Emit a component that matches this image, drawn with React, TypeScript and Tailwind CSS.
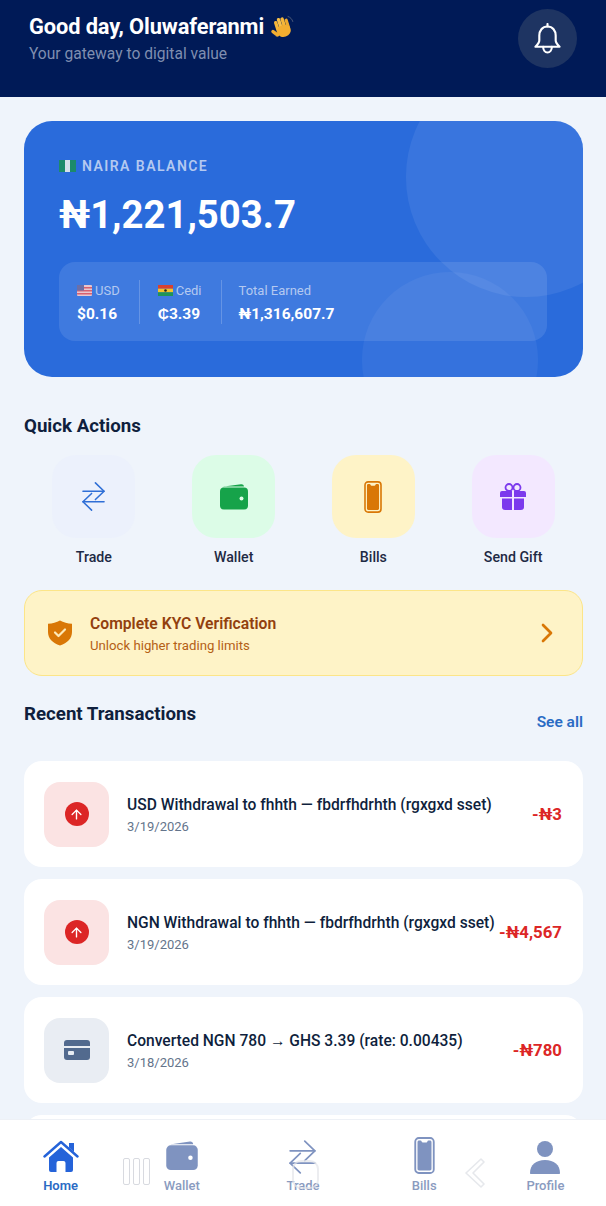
import { ArrowUp, ChevronRight } from "lucide-react";

const font = { fontFamily: "Roboto, sans-serif" };

function WaveHand() {
  return (
    <svg width="24" height="24" viewBox="0 0 24 24">
      <path d="M17 1.500c2.500.8 4 2.500 4.800 5" fill="none" stroke="#4a5878" strokeWidth="1" strokeLinecap="round" />
      <path d="M2 17c.5 2 1.800 3.600 3.800 4.500" fill="none" stroke="#4a5878" strokeWidth="1" strokeLinecap="round" />
      <g transform="rotate(-18 12 13)">
        <rect x="5" y="4" width="3.4" height="12" rx="1.7" fill="#f5b73a" />
        <rect x="8.6" y="2" width="3.4" height="13" rx="1.7" fill="#f7c04a" />
        <rect x="12.2" y="2.5" width="3.4" height="13" rx="1.7" fill="#f5b73a" />
        <rect x="15.8" y="5" width="3.2" height="11" rx="1.6" fill="#eda92f" />
        <ellipse cx="12" cy="16" rx="7" ry="6" fill="#f3ae30" />
        <rect x="1" y="11" width="3.4" height="9" rx="1.7" fill="#f3ae30" transform="rotate(-35 3 15)" />
      </g>
    </svg>
  );
}

function BellIcon() {
  return (
    <svg width="27" height="31" viewBox="0 0 28 32" fill="none" stroke="#fff" strokeWidth="2.200" strokeLinecap="round" strokeLinejoin="round">
      <path d="M14 1v2.500" />
      <path d="M14 3.500C8.500 3.500 5.500 8 5.500 13v5c0 2.500-2 4.500-4 6.500h25c-2-2-4-4-4-6.500v-5C22.500 8 19.500 3.500 14 3.500z" />
      <path d="M9.500 24.500c0 3.500 2 6 4.500 6s4.500-2.500 4.500-6" />
    </svg>
  );
}

function FlagNg() {
  return (
    <svg width="17" height="12" viewBox="0 0 17 12">
      <rect width="17" height="12" rx="1" fill="#d5e0ea" />
      <rect width="6" height="12" fill="#1c8a6a" />
      <rect x="11" width="6" height="12" fill="#1c8a6a" />
    </svg>
  );
}

function FlagUs() {
  return (
    <svg width="15" height="11" viewBox="0 0 15 11">
      <rect width="15" height="11" rx="1" fill="#e9c6cf" />
      <rect y="2" width="15" height="1.5" fill="#d8606f" />
      <rect y="5" width="15" height="1.5" fill="#d8606f" />
      <rect y="8" width="15" height="1.5" fill="#d8606f" />
      <rect width="7" height="5.5" fill="#6b6fa8" />
    </svg>
  );
}

function FlagGh() {
  return (
    <svg width="15" height="11" viewBox="0 0 15 11">
      <rect width="15" height="3.7" fill="#d9412f" />
      <rect y="3.7" width="15" height="3.6" fill="#f3c32d" />
      <rect y="7.3" width="15" height="3.7" fill="#1f9456" />
      <circle cx="7.5" cy="5.5" r="1.3" fill="#222" />
    </svg>
  );
}

function TradeIcon({ w, h, color, width = 2 }: { w: number; h: number; color: string; width?: number }) {
  return (
    <svg width={w} height={h} viewBox="0 0 24 30" fill="none" stroke={color} strokeWidth={width} strokeLinecap="round" strokeLinejoin="round">
      <path d="M1 9.500h22" />
      <path d="M14 .8l9 8.700-9 8.700" />
      <path d="M23 20.500H1" />
      <path d="M10 11.800l-9 8.700 9 8.700" />
    </svg>
  );
}

function WalletIcon({ size, color, hole }: { size: number; color: string; hole: string }) {
  return (
    <svg width={size} height={size} viewBox="0 0 32 32">
      <path d="M4 7.500C5 6 6.500 5.500 8 5.300L23 3.200c1.600-.2 2.800.6 3 2.300H8c-1.500 0-3 .7-4 2z" fill={color} />
      <rect x="2" y="6.500" width="28" height="22" rx="4" fill={color} />
      <circle cx="23.500" cy="17.500" r="2" fill={hole} />
    </svg>
  );
}

function PhoneIcon({ w, h, fill, stroke, bg }: { w: number; h: number; fill: string; stroke: string; bg: string }) {
  return (
    <svg width={w} height={h} viewBox="0 0 20 36">
      <rect x="1" y="1" width="18" height="34" rx="3.500" fill={bg} stroke={stroke} strokeWidth="1.800" />
      <path d="M3.200 5c0-1 .6-1.600 1.600-1.600h1.400c.6 0 .8.300 1 .9.200.7.600 1 1.300 1h3c.7 0 1.100-.3 1.300-1 .2-.6.400-.9 1-.9h1.400c1 0 1.600.6 1.600 1.600v26c0 1-.6 1.600-1.600 1.600H4.800c-1 0-1.600-.6-1.600-1.600z" fill={fill} />
    </svg>
  );
}

function GiftIcon() {
  return (
    <svg width="28" height="30" viewBox="0 0 28 30">
      <circle cx="10" cy="5.500" r="3.500" fill="none" stroke="#7c3aed" strokeWidth="1.800" />
      <circle cx="18" cy="5.500" r="3.500" fill="none" stroke="#7c3aed" strokeWidth="1.800" />
      <path d="M3 9h10v6H1v-4a2 2 0 0 1 2-2z" fill="#7c3aed" />
      <path d="M15 9h10a2 2 0 0 1 2 2v4H15z" fill="#7c3aed" />
      <path d="M3 16.500h10V28H6a3 3 0 0 1-3-3z" fill="#7c3aed" />
      <path d="M15 16.500h10V25a3 3 0 0 1-3 3h-7z" fill="#7c3aed" />
    </svg>
  );
}

function ShieldIcon() {
  return (
    <svg width="28" height="28" viewBox="0 0 28 28">
      <path d="M14 1.500C17.500 3.500 21.500 4.500 26 4.800V13c0 6.500-4.500 11-12 13.500C6.500 24 2 19.500 2 13V4.800C6.500 4.500 10.500 3.500 14 1.500z" fill="#d97706" />
      <path d="M9 13.500l3.500 3.500 6.500-6.500" fill="none" stroke="#fde9b8" strokeWidth="2.200" strokeLinecap="round" strokeLinejoin="round" />
    </svg>
  );
}

function CardIcon() {
  return (
    <svg width="26" height="20" viewBox="0 0 26 20">
      <path d="M3 0h20a3 3 0 0 1 3 3v3H0V3a3 3 0 0 1 3-3z" fill="#526a8e" />
      <path d="M0 8h26v9a3 3 0 0 1-3 3H3a3 3 0 0 1-3-3z" fill="#526a8e" />
      <rect x="4" y="11" width="6" height="4" rx="1" fill="#e8edf3" />
    </svg>
  );
}

function HomeIcon() {
  return (
    <svg width="36" height="34" viewBox="0 0 36 34">
      <path d="M26 3h5v9l-5-4.500z" fill="#2563d9" />
      <path d="M1.500 16.500L18 2l16.500 14.500" fill="none" stroke="#2563d9" strokeWidth="2.400" strokeLinecap="round" strokeLinejoin="round" />
      <path d="M18 7l12 10.500V30a2 2 0 0 1-2 2h-5.500v-9a2 2 0 0 0-2-2h-5a2 2 0 0 0-2 2v9H8a2 2 0 0 1-2-2V17.500z" fill="#2563d9" />
    </svg>
  );
}

function ProfileIcon() {
  return (
    <svg width="32" height="34" viewBox="0 0 32 34">
      <circle cx="16" cy="9" r="8" fill="#7f93c0" />
      <path d="M1 33c0-8 6-13 15-13s15 5 15 13c0 .6-.4 1-1 1H2c-.6 0-1-.4-1-1z" fill="#7f93c0" />
    </svg>
  );
}

const actions = [
  { label: "Trade", bg: "bg-[#ecf1fc]", icon: <TradeIcon w={23} h={29} color="#2f6fd6" width={1.6} /> },
  { label: "Wallet", bg: "bg-[#dcfce7]", icon: <WalletIcon size={32} color="#16a34a" hole="#dcfce7" /> },
  { label: "Bills", bg: "bg-[#fef3c7]", icon: <PhoneIcon w={18} h={32} fill="#d97706" stroke="#d97706" bg="#fef3c7" /> },
  { label: "Send Gift", bg: "bg-[#f3e8ff]", icon: <GiftIcon /> },
];

const txs = [
  { title: "USD Withdrawal to fhhth — fbdrfhdrhth (rgxgxd sset)", date: "3/19/2026", amount: "-₦3", out: true },
  { title: "NGN Withdrawal to fhhth — fbdrfhdrhth (rgxgxd sset)", date: "3/19/2026", amount: "-₦4,567", out: true },
  { title: "Converted NGN 780 → GHS 3.39 (rate: 0.00435)", date: "3/18/2026", amount: "-₦780", out: false },
];

export default function App() {
  return (
    <div style={font} className="relative w-[606px] h-[1206px] overflow-hidden bg-[#eff4fb] flex flex-col">
      <header className="h-[97px] shrink-0 bg-[#001a57] flex items-start justify-between pl-[29px] pr-[29px] pt-[9px]">
        <div>
          <div className="flex items-center gap-[7px] h-[36px]">
            <span className="text-[21.8px] font-bold text-white tracking-[-0.1px]">Good day, Oluwaferanmi</span>
            <WaveHand />
          </div>
          <p className="text-[15.6px] leading-5 text-[#7f8eb0] mt-[-1px]">Your gateway to digital value</p>
        </div>
        <div className="w-[59px] h-[59px] rounded-full bg-[#1e3462] flex items-center justify-center">
          <BellIcon />
        </div>
      </header>

      <main className="flex-1 pl-6 pr-[23px] pt-6">
        <section className="relative h-[256px] rounded-[28px] bg-[#2a6bdb] overflow-hidden pl-[35px] pr-9 pt-9">
          <div className="absolute left-[382px] top-[-64px] w-[240px] h-[240px] rounded-full bg-white/[0.07]" />
          <div className="absolute left-[338px] top-[151px] w-[176px] h-[176px] rounded-full bg-white/[0.05]" />
          <div className="relative flex items-center gap-[6px] h-[18px]">
            <FlagNg />
            <span className="text-[14px] font-semibold tracking-[1.45px] text-[#b4c9f0]">NAIRA BALANCE</span>
          </div>
          <p className="relative text-[38.3px] font-bold leading-[46px] text-white mt-[17px]">₦1,221,503.7</p>
          <div className="relative mt-[24px] h-[79px] rounded-2xl bg-white/10 flex items-center pl-[18px] pt-[3px]">
            <div className="pr-[19px]">
              <div className="flex items-center gap-[3px] text-[13px] text-[#b4c9f0] leading-5"><FlagUs /> USD</div>
              <div className="text-[15.5px] font-bold text-white leading-6 mt-[1px]">$0.16</div>
            </div>
            <div className="w-px h-[44px] bg-white/20 mt-[-3px]" />
            <div className="pl-[18px] pr-[19px]">
              <div className="flex items-center gap-[3px] text-[13px] text-[#b4c9f0] leading-5"><FlagGh /> Cedi</div>
              <div className="text-[15.5px] font-bold text-white leading-6 mt-[1px]">₵3.39</div>
            </div>
            <div className="w-px h-[44px] bg-white/20 mt-[-3px]" />
            <div className="pl-[17px]">
              <div className="text-[13px] text-[#b4c9f0] leading-5">Total Earned</div>
              <div className="text-[15.5px] font-bold text-white leading-6 mt-[1px]">₦1,316,607.7</div>
            </div>
          </div>
        </section>

        <h2 className="text-[18.7px] font-bold text-[#0f1f3d] leading-6 mt-[37px]">Quick Actions</h2>

        <div className="grid grid-cols-4 mt-[17px]">
          {actions.map((a) => (
            <div key={a.label} className="flex flex-col items-center">
              <div className={`w-[83px] h-[83px] rounded-[24px] flex items-center justify-center ${a.bg}`}>{a.icon}</div>
              <span className="text-[14.2px] font-medium text-[#1e2a44] leading-5 mt-[9px]">{a.label}</span>
            </div>
          ))}
        </div>

        <div className="mt-[23px] h-[86px] rounded-[18px] bg-[#fef3c7] border border-[#fce588] flex items-center pl-[21px] pr-[19px]">
          <ShieldIcon />
          <div className="ml-[16px] flex-1 pt-[2px]">
            <p className="text-[15.7px] font-semibold text-[#92400e] leading-5">Complete KYC Verification</p>
            <p className="text-[13.2px] text-[#b45f16] leading-[18px] mt-[3px]">Unlock higher trading limits</p>
          </div>
          <ChevronRight size={32} color="#d97706" strokeWidth={2} />
        </div>

        <div className="flex justify-between mt-[25px] h-[60px]">
          <h2 className="text-[18.7px] font-bold text-[#0f1f3d] leading-6 mt-[1px]">Recent Transactions</h2>
          <span className="text-[15.5px] font-semibold text-[#2a6bc4] leading-5 mt-[11px]">See all</span>
        </div>

        <div className="flex flex-col gap-3">
          {txs.map((t) => (
            <div key={t.title + t.amount} className="h-[106px] shrink-0 rounded-[18px] bg-white flex items-center pl-[20px] pr-[21px]">
              <div className={`w-[65px] h-[65px] shrink-0 rounded-[16px] flex items-center justify-center ${t.out ? "bg-[#fbe3e3]" : "bg-[#e9edf3]"}`}>
                {t.out ? (
                  <div className="w-6 h-6 rounded-full bg-[#dc2626] flex items-center justify-center">
                    <ArrowUp size={15} color="#fff" strokeWidth={2.2} />
                  </div>
                ) : (
                  <CardIcon />
                )}
              </div>
              <div className="ml-[18px] flex-1 min-w-0 pt-[3px]">
                <p className="text-[15.6px] font-medium text-[#0f1f3d] leading-5 whitespace-nowrap">{t.title}</p>
                <p className="text-[13px] text-[#64748b] leading-[18px] mt-[3px]">{t.date}</p>
              </div>
              <span className="text-[16.8px] font-bold text-[#dc2626] whitespace-nowrap pt-[2px]">{t.amount}</span>
            </div>
          ))}
          <div className="h-[40px] shrink-0 rounded-t-[18px] bg-white" />
        </div>
      </main>

      <nav className="absolute left-0 right-0 bottom-0 h-[87px] bg-white border-t border-[#eef1f6]">
        <div className="relative h-full">
          <div className="grid grid-cols-5 h-full pt-[18px]">
            <div className="flex flex-col items-center">
              <div className="h-[36px] flex items-end"><HomeIcon /></div>
              <span className="text-[13px] font-semibold text-[#2a6bc4] mt-[2px] leading-5">Home</span>
            </div>
            <div className="flex flex-col items-center">
              <div className="h-[36px] flex items-end"><WalletIcon size={36} color="#7f93c0" hole="#ffffff" /></div>
              <span className="text-[13px] font-medium text-[#8a9bc0] mt-[2px] leading-5">Wallet</span>
            </div>
            <div className="flex flex-col items-center">
              <div className="h-[36px] flex items-end"><TradeIcon w={27} h={34} color="#7f93c0" width={1.5} /></div>
              <span className="text-[13px] font-medium text-[#8a9bc0] mt-[2px] leading-5">Trade</span>
            </div>
            <div className="flex flex-col items-center">
              <div className="h-[36px] flex items-end"><PhoneIcon w={21} h={37} fill="#7f93c0" stroke="#7f93c0" bg="#ffffff" /></div>
              <span className="text-[13px] font-medium text-[#8a9bc0] mt-[2px] leading-5">Bills</span>
            </div>
            <div className="flex flex-col items-center">
              <div className="h-[36px] flex items-end"><ProfileIcon /></div>
              <span className="text-[13px] font-medium text-[#8a9bc0] mt-[2px] leading-5">Profile</span>
            </div>
          </div>

          {/* android nav bar ghost on top of the tabs */}
          <div className="absolute left-[123px] top-[38px] flex gap-[3px]">
            <div className="w-[7px] h-[27px] rounded-[2px] border border-[#d8dae0]" />
            <div className="w-[7px] h-[27px] rounded-[2px] border border-[#d8dae0]" />
            <div className="w-[7px] h-[27px] rounded-[2px] border border-[#d8dae0]" />
          </div>
          <div className="absolute left-[292px] top-[40px] w-[27px] h-[29px] rounded-[9px] border-2 border-[#e4e6ea]/70" />
          <svg className="absolute left-[464px] top-[38px]" width="22" height="30" viewBox="0 0 22 30" fill="none" stroke="#e6e8ec" strokeWidth="1.600" strokeLinejoin="round">
            <path d="M17 1L2 15l15 14 3-3L9 15 20 4z" />
          </svg>
        </div>
      </nav>
    </div>
  );
}
